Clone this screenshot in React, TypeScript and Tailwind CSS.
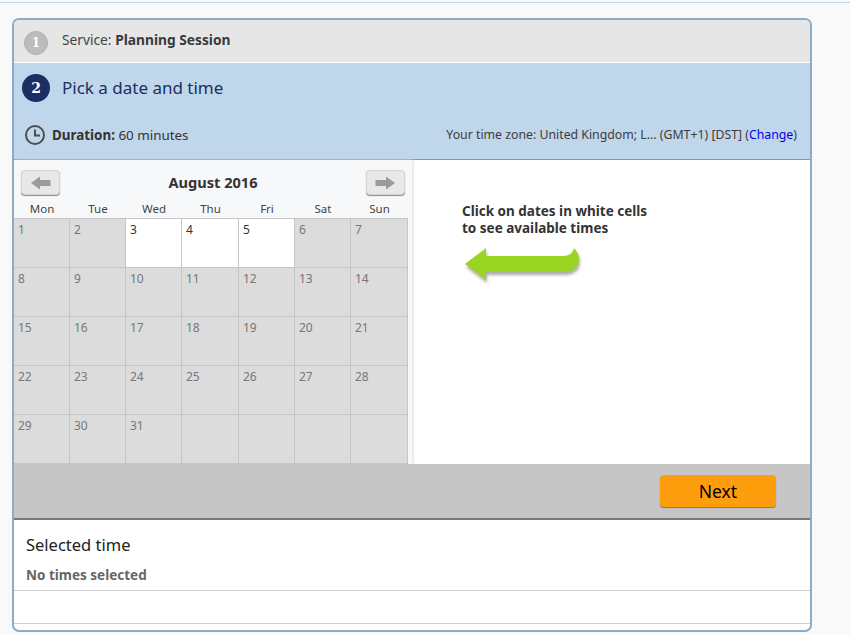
import React from 'react';

const weekDays = ['Mon', 'Tue', 'Wed', 'Thu', 'Fri', 'Sat', 'Sun'];
const availableDays = [3, 4, 5];
const cells: (number | null)[] = [...Array.from({ length: 31 }, (_, i) => i + 1), null, null, null, null];

const NavArrow: React.FC<{ flip?: boolean }> = ({ flip }) => (
  <button className="w-[39px] h-[25px] bg-[#e8e8e8] border border-[#d4d4d4] rounded-[4px] shadow-[0_1px_1px_#8a8a8a] flex items-center justify-center">
    <svg width="20" height="14" viewBox="0 0 20 14" className={flip ? 'rotate-180' : ''}>
      <path d="M0 7 L9 0.5 V4 H19.5 V10 H9 V13.5 Z" fill="#9b9b9b" />
    </svg>
  </button>
);

const App: React.FC = () => {
  return (
    <div className="w-[850px] h-[635px] overflow-hidden bg-[#f9f9f9] font-['Noto_Sans','DejaVu_Sans',sans-serif] text-[#333]">
      <div className="mt-[2px] h-[1px] bg-[#c3d3e2]" />
      <div className="ml-[12px] mt-[15px] w-[800px] h-[614px] border-2 border-[#8aacc8] rounded-[7px] bg-white overflow-hidden flex flex-col">
        {/* Step 1 */}
        <div className="h-[42px] bg-[#e6e6e6] flex items-center pl-[10px] border-b border-white box-content">
          <div className="w-[24px] h-[24px] mt-[3px] rounded-full bg-[#bcbcbc] border border-[#b0b0b0] flex items-center justify-center text-white text-[12px] font-bold font-['DejaVu_Serif',serif]">
            1
          </div>
          <span className="ml-[14px] mb-[2px] text-[13.75px] leading-[18px] text-[#444]">
            Service: <b className="text-[#3a3a3a]">Planning Session</b>
          </span>
        </div>

        {/* Step 2 */}
        <div className="h-[97px] shrink-0 bg-[#c0d6ea] border-b border-[#8f979e]">
          <div className="flex items-center pl-[8px] pt-[11px]">
            <div className="w-[28px] h-[28px] rounded-full bg-[#1b2f64] flex items-center justify-center text-white text-[14px] font-bold font-['DejaVu_Serif',serif]">
              2
            </div>
            <span className="ml-[12px] text-[17px] leading-[24px] text-[#17305f]">Pick a date and time</span>
          </div>
          <div className="flex items-center justify-between pl-[11px] pr-[13px] mt-[22px]">
            <div className="flex items-center text-[13.4px] leading-[20px]">
              <svg width="20" height="20" viewBox="0 0 20 20" fill="none" stroke="#4d4d4d" strokeWidth="2">
                <circle cx="10" cy="10" r="9" />
                <path d="M10 4.5 V10.5 H15" />
              </svg>
              <span className="ml-[7px] pt-[1px]">
                <b>Duration:</b> 60 minutes
              </span>
            </div>
            <div className="pt-[1px] text-[12.3px] leading-[18px] text-[#3c3c3c]">
              Your time zone: United Kingdom; L... (GMT+1) [DST] (<a className="text-[#0000ee]">Change</a>)
            </div>
          </div>
        </div>

        {/* Calendar + hint */}
        <div className="h-[304px] shrink-0 flex">
          <div className="w-[398px] bg-[#f7f8fa] shadow-[1px_0_3px_#d8d8d8]">
            <div className="flex items-center justify-between pl-[7px] pr-[7px] pt-[10px]">
              <NavArrow />
              <span className="text-[14.6px] font-bold leading-[25px] text-[#333]">August 2016</span>
              <NavArrow flip />
            </div>
            <div className="w-[393px] grid grid-cols-[56px_56px_56px_57px_56px_56px_57px] h-[23px] items-center text-center text-[11.5px] text-[#444]">
              {weekDays.map((d) => (
                <span key={d} className="pt-[5px] leading-[16px]">{d}</span>
              ))}
            </div>
            <div className="w-[394px] grid grid-cols-[56px_56px_56px_57px_56px_56px_57px] grid-rows-[repeat(5,49px)] border-t border-[#c6c6c6]">
              {cells.map((day, i) => {
                const open = day !== null && availableDays.includes(day);
                return (
                  <div
                    key={i}
                    className={`pl-[4px] pt-[2px] text-[12px] leading-[17px] border-r border-b border-[#c6c6c6] ${
                      open ? 'bg-white text-[#333]' : 'bg-[#dcdcdc] text-[#777]'
                    }`}
                  >
                    {day}
                  </div>
                );
              })}
            </div>
          </div>
          <div className="flex-1 pl-[50px] pt-[43px]">
            <p className="text-[13.5px] font-bold leading-[17px] text-[#333]">
              Click on dates in white cells
              <br />
              to see available times
            </p>
            <svg width="120" height="38" viewBox="0 0 120 38" className="mt-[10px] ml-[3px] overflow-visible">
              <defs>
                <filter id="arrowShadow" x="-10%" y="-20%" width="120%" height="150%">
                  <feDropShadow dx="1" dy="3" stdDeviation="1.5" floodColor="#555" floodOpacity="0.5" />
                </filter>
              </defs>
              <path
                d="M0 17 L21 1 V9 H98 C104 9 108 6 109 1 C112 4 114 8 114 12 C114 20 108 25 100 25 H21 V33 Z"
                fill="#9ad424"
                filter="url(#arrowShadow)"
              />
            </svg>
          </div>
        </div>

        {/* Footer bar */}
        <div className="h-[56px] shrink-0 bg-[#c6c6c6] border-b-2 border-[#777] flex justify-end items-start pr-[34px] pt-[11px]">
          <button className="w-[116px] h-[32px] bg-[#ff9e0c] rounded-[4px] shadow-[0_1px_1px_#777] text-[17.5px] leading-[32px] text-black">
            Next
          </button>
        </div>

        {/* Selected time */}
        <div className="h-[71px] shrink-0 border-b border-[#d2d2d2] pl-[12px] pt-[14px]">
          <div className="text-[16.5px] leading-[22px] text-[#222]">Selected time</div>
          <div className="mt-[10px] text-[13.5px] leading-[18px] font-bold text-[#666]">No times selected</div>
        </div>
        <div className="h-[33px] shrink-0 border-b border-[#d2d2d2]" />
      </div>
    </div>
  );
};

export default App;
